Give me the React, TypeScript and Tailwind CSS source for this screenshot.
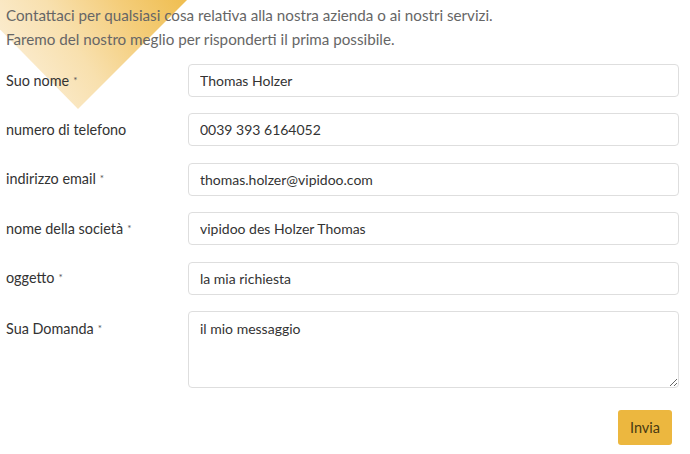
import React from "react";

const fields = [
  { label: "Suo nome", required: true, value: "Thomas Holzer" },
  { label: "numero di telefono", required: false, value: "0039 393 6164052" },
  { label: "indirizzo email", required: true, value: "thomas.holzer@vipidoo.com" },
  { label: "nome della società", required: true, value: "vipidoo des Holzer Thomas" },
  { label: "oggetto", required: true, value: "la mia richiesta" },
];

const font = { fontFamily: "Lato, 'Open Sans', sans-serif" };

function Label({ text, required }: { text: string; required: boolean }) {
  return (
    <label className="block w-[188px] shrink-0 pl-[6px] text-[14.4px] text-[#333]">
      {text}
      {required && <span className="ml-[4px] relative -top-[2px] text-[10px] text-[#555]">*</span>}
    </label>
  );
}

export default function App() {
  return (
    <div className="relative w-[690px] h-[454px] bg-white overflow-hidden" style={font}>
      {/* decorative shape behind the intro */}
      <svg className="absolute left-0 top-0" width="220" height="120" viewBox="0 0 220 120">
        <defs>
          <linearGradient id="decoGrad" gradientUnits="userSpaceOnUse" x1="190" y1="0" x2="20" y2="110">
            <stop offset="0" stopColor="#efbd4e" />
            <stop offset="0.3" stopColor="#f4cd7a" />
            <stop offset="0.6" stopColor="#f8e0ae" />
            <stop offset="1" stopColor="#fcf0da" />
          </linearGradient>
        </defs>
        <polygon points="78,109 192,-5 -34,-5" fill="url(#decoGrad)" />
      </svg>

      <div className="relative">
        <p className="pt-[3px] pl-[6px] text-[15.2px] leading-[24px] text-[#666]">
          Contattaci per qualsiasi cosa relativa alla nostra azienda o ai nostri servizi.
          <br />
          Faremo del nostro meglio per risponderti il prima possibile.
        </p>

        <form className="mt-[13px] flex flex-col gap-[16.4px] pr-[11px]">
          {fields.map((f) => (
            <div key={f.label} className="flex items-center">
              <Label text={f.label} required={f.required} />
              <input
                readOnly
                value={f.value}
                className="flex-1 h-[33px] rounded-[4px] border border-[#dedede] bg-white px-[11px] text-[14px] text-[#333] outline-none"
              />
            </div>
          ))}
          <div className="flex items-start">
            <div className="w-[188px] shrink-0 pt-[7px]">
              <Label text="Sua Domanda" required={true} />
            </div>
            <textarea
              readOnly
              value="il mio messaggio"
              className="flex-1 h-[77px] rounded-[4px] border border-[#dedede] bg-white px-[11px] py-[5px] text-[14px] leading-[24px] text-[#333] outline-none"
            />
          </div>
        </form>

        <div className="flex justify-end pr-[18px] mt-[22px]">
          <button className="h-[35px] w-[54px] rounded-[3px] bg-[#ecb73f] text-[14.5px] text-[#4a3a12]">
            Invia
          </button>
        </div>
      </div>
    </div>
  );
}
